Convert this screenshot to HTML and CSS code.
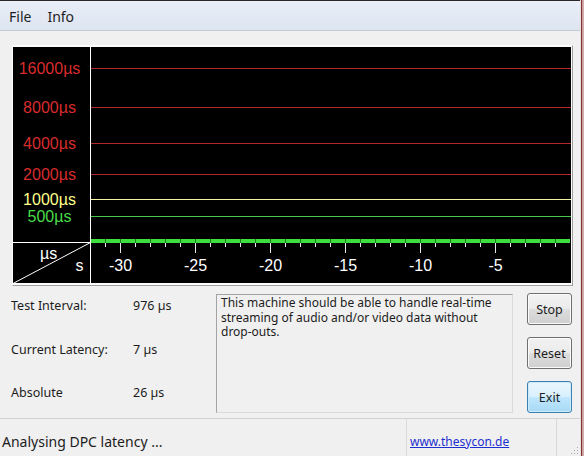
FILE: index.html
```html
<!DOCTYPE html>
<html>
<head>
<meta charset="utf-8">
<link rel="stylesheet" href="styles.css">
</head>
<body>
<div class="app">
  <div class="menubar">
    <span class="menu-item">File</span>
    <span class="menu-item">Info</span>
  </div>
  <div class="chart-wrap">
    <svg class="chart" width="558" height="236" viewBox="13 47 558 236" xmlns="http://www.w3.org/2000/svg">
      <rect x="13" y="47" width="558" height="236" fill="#000"/>
      <g stroke-width="1" shape-rendering="crispEdges">
        <line x1="91" y1="68.5" x2="571" y2="68.5" stroke="#b02a2a"/>
        <line x1="91" y1="107.5" x2="571" y2="107.5" stroke="#b02a2a"/>
        <line x1="91" y1="143.5" x2="571" y2="143.5" stroke="#b02a2a"/>
        <line x1="91" y1="174.5" x2="571" y2="174.5" stroke="#b02a2a"/>
        <line x1="91" y1="199.5" x2="571" y2="199.5" stroke="#f4f4a0"/>
        <line x1="91" y1="216.5" x2="571" y2="216.5" stroke="#48c848"/>
        <line x1="13" y1="242.5" x2="91" y2="242.5" stroke="#fff"/>
        <line x1="90.5" y1="47" x2="90.5" y2="283" stroke="#fff"/>
        <rect x="91" y="239" width="479" height="4" fill="#3ede3e" stroke="none"/>
        <path stroke="#1f7a1f" d="M105.5 239V243M120.5 239V243M135.5 239V243M150.5 239V243M165.5 239V243M180.5 239V243M195.5 239V243M210.5 239V243M225.5 239V243M240.5 239V243M255.5 239V243M270.5 239V243M285.5 239V243M300.5 239V243M315.5 239V243M330.5 239V243M345.5 239V243M360.5 239V243M375.5 239V243M390.5 239V243M405.5 239V243M420.5 239V243M435.5 239V243M450.5 239V243M465.5 239V243M480.5 239V243M495.5 239V243M510.5 239V243M525.5 239V243M540.5 239V243M555.5 239V243"/>
        <path stroke="#e8e8e8" d="M105.5 243V247M120.5 243V253M135.5 243V247M150.5 243V247M165.5 243V247M180.5 243V247M195.5 243V253M210.5 243V247M225.5 243V247M240.5 243V247M255.5 243V247M270.5 243V253M285.5 243V247M300.5 243V247M315.5 243V247M330.5 243V247M345.5 243V253M360.5 243V247M375.5 243V247M390.5 243V247M405.5 243V247M420.5 243V253M435.5 243V247M450.5 243V247M465.5 243V247M480.5 243V247M495.5 243V253M510.5 243V247M525.5 243V247M540.5 243V247M555.5 243V247"/>
      </g>
      <line x1="13" y1="283.5" x2="90.5" y2="242.5" stroke="#fff" stroke-width="1"/>
      <g class="ylab" text-anchor="middle">
        <text x="49.5" y="74" fill="#d82c2c">16000µs</text>
        <text x="49.5" y="113" fill="#d82c2c">8000µs</text>
        <text x="49.5" y="149" fill="#d82c2c">4000µs</text>
        <text x="49.5" y="180" fill="#d82c2c">2000µs</text>
        <text x="49.5" y="205" fill="#ffff8c">1000µs</text>
        <text x="49.5" y="222" fill="#48dc48">500µs</text>
      </g>
      <g class="xlab" text-anchor="middle" fill="#fff">
        <text x="120.5" y="271">-30</text>
        <text x="195.5" y="271">-25</text>
        <text x="270.5" y="271">-20</text>
        <text x="345.5" y="271">-15</text>
        <text x="420.5" y="271">-10</text>
        <text x="495.5" y="271">-5</text>
      </g>
      <text class="unit" x="40" y="258.5" fill="#fff">µs</text>
      <text class="unit" x="75.5" y="271" fill="#fff">s</text>
    </svg>
  </div>
  <div class="lower">
    <div class="stats">
      <span>Test Interval:</span><span>976 µs</span>
      <span>Current Latency:</span><span>7 µs</span>
      <span>Absolute</span><span>26 µs</span>
    </div>
    <div class="msg">This machine should be able to handle real-time streaming of audio and/or video data without drop-outs.</div>
    <div class="buttons">
      <button class="btn">Stop</button>
      <button class="btn">Reset</button>
      <button class="btn btn-default">Exit</button>
    </div>
  </div>
  <div class="status">
    <div class="cell cell-main">Analysing DPC latency ...</div>
    <div class="cell cell-link"><a class="link" href="#">www.thesycon.de</a></div>
    <div class="cell cell-grip">
      <svg width="9" height="9" viewBox="0 0 9 9" xmlns="http://www.w3.org/2000/svg">
        <g fill="#a9a9a9">
          <rect x="7" y="1" width="1" height="1"/>
          <rect x="4" y="4" width="1" height="1"/><rect x="7" y="4" width="1" height="1"/>
          <rect x="1" y="7" width="1" height="1"/><rect x="4" y="7" width="1" height="1"/><rect x="7" y="7" width="1" height="1"/>
        </g>
      </svg>
    </div>
  </div>
</div>
<div class="frame"></div>
</body>
</html>
```

FILE: styles.css
```css
html, body {
  margin: 0;
  padding: 0;
}

body {
  width: 584px;
  height: 456px;
  overflow: hidden;
  display: flex;
  background: #f0f0f0;
  font-family: "Noto Sans", "Open Sans", sans-serif;
  color: #1c1c1c;
}

.app {
  width: 580px;
  height: 456px;
  display: flex;
  flex-direction: column;
}

.frame {
  width: 4px;
  height: 456px;
  background: linear-gradient(to right, #eadede 0, #eadede 1px, #7e3434 1px, #7e3434 2px, #c99a9a 2px, #d7b2b2 4px);
}

.menubar {
  height: 31px;
  box-sizing: border-box;
  border-top: 1px solid #2c2626;
  border-bottom: 1px solid #c3cbd9;
  background: linear-gradient(#e9eef7, #dde5f1);
  display: flex;
  align-items: center;
  padding: 2px 0 0 9px;
  font-size: 14px;
  color: #1e1e1e;
}

.menu-item {
  margin-right: 16px;
}

.chart-wrap {
  align-self: flex-start;
  margin: 14px 0 0 12px;
  padding: 1px 1px 2px 0;
  border-top: 1px solid #fdfdfd;
  border-left: 1px solid #fdfdfd;
  border-right: 1px solid #a0a0a0;
  border-bottom: 1px solid #a0a0a0;
  background: #fbfbfb;
  line-height: 0;
}

.chart {
  display: block;
}

.ylab text, .xlab text, .unit {
  font-family: "Liberation Sans", Arial, sans-serif;
  font-size: 16px;
}

.lower {
  display: flex;
  padding: 7px 0 0 11px;
}

.stats {
  width: 205px;
  display: grid;
  grid-template-columns: 122px 1fr;
  row-gap: 28.5px;
  align-content: start;
  padding-top: 5px;
  font-size: 12.5px;
  line-height: 15px;
  color: #1c1c1c;
}

.msg {
  width: 297px;
  height: 119px;
  box-sizing: border-box;
  margin-top: 1px;
  padding: 1px 6px 0 4px;
  border-top: 1px solid #a3a3a3;
  border-left: 1px solid #a3a3a3;
  border-right: 1px solid #dadada;
  border-bottom: 1px solid #dadada;
  font-size: 12px;
  line-height: 14.5px;
  color: #1c1c1c;
}

.buttons {
  margin-left: 14px;
  display: flex;
  flex-direction: column;
  gap: 12px;
}

.btn {
  width: 45px;
  height: 32px;
  padding: 0;
  border: 1px solid #707070;
  border-radius: 3px;
  background: linear-gradient(#f2f2f2 0%, #ebebeb 48%, #dddddd 52%, #cfcfcf 100%);
  box-shadow: inset 0 0 0 1px #fbfbfb;
  font-family: "Noto Sans", "Open Sans", sans-serif;
  font-size: 12.5px;
  color: #1c1c1c;
}

.btn-default {
  border-color: #3c7fb1;
  background: linear-gradient(#eaf6fd 0%, #d9f0fc 48%, #bee6fd 52%, #a7d9f5 100%);
  box-shadow: inset 0 0 0 1px #cdeaf9;
}

.status {
  margin-top: auto;
  height: 38px;
  box-sizing: border-box;
  border-top: 1px solid #d2d2d2;
  display: flex;
  align-items: stretch;
}

.cell {
  display: flex;
  align-items: center;
  padding-top: 8px;
  box-sizing: border-box;
}

.cell-main {
  width: 407px;
  padding-left: 2px;
  border-right: 1px solid #d9d9d9;
  font-size: 14px;
  color: #1c1c1c;
}

.cell-link {
  width: 150px;
  padding-left: 3px;
  border-right: 1px solid #d9d9d9;
  font-size: 12px;
}

.link {
  color: #1d2fcf;
  text-decoration: underline;
}

.cell-grip {
  flex: 1;
  align-items: flex-end;
  justify-content: flex-end;
  padding: 0 1px 1px 0;
}
```
